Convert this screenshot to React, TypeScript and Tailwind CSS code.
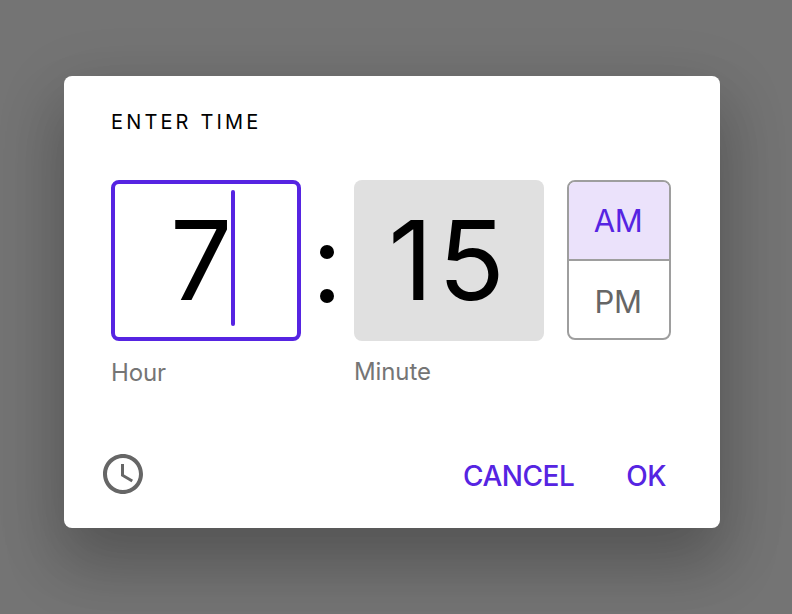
export default function App() {
  return (
    <div className="flex h-[614px] w-[792px] overflow-hidden bg-[#747474] pl-16 pt-[76px] font-['Inter',sans-serif]">
      <main className="flex h-[452px] w-[656px] flex-col rounded-lg bg-white pl-[47px] pr-[49px] pt-8 shadow-[0_36px_60px_3px_rgba(0,0,0,0.18),0_18px_70px_4px_rgba(0,0,0,0.12)]">
        <h1 className="h-[26px] whitespace-nowrap pt-px text-[20px] leading-[26px] tracking-[3.15px] text-black">ENTER TIME</h1>
        <div className="mt-[46px] flex h-[161px] shrink-0">
          <div className="flex h-[161px] w-[190px] shrink-0 rounded-lg border-4 border-[#5624e2] pl-[55px] pt-[6px]">
            <span className="w-[61px] whitespace-nowrap text-[110px] leading-[140px]">7</span>
            <span className="h-[136px] w-1 rounded-full bg-[#5624e2]" />
          </div>
          <div className="flex w-[53px] flex-col items-center gap-[30px] pr-[2px] pt-[65px]">
            <i className="size-[14px] rounded-full bg-black" />
            <i className="size-[14px] rounded-full bg-black" />
          </div>
          <div className="h-[161px] w-[190px] shrink-0 rounded-lg bg-[#e0e0e0] text-center text-[110px] leading-[160px] tracking-[5px]">15</div>
          <div className="ml-[23px] h-[160px] w-[104px] shrink-0 overflow-hidden rounded-lg border-2 border-[#9e9e9e] pr-[2px] text-center text-[31px] tracking-[-0.4px]">
            <div className="-mr-[2px] h-[79px] border-b-2 border-[#9e9e9e] bg-[#ebe2fb] pr-[2px] leading-[78px] text-[#5624e2]">AM</div>
            <div className="h-[77px] leading-[82px] text-[#666]">PM</div>
          </div>
        </div>
        <div className="mt-[17px] flex h-7 text-[24px] leading-7 tracking-[-0.1px] text-[#757575]">
          <span className="w-[243px] pt-px">Hour</span><span>Minute</span>
        </div>
        <footer className="mt-[62px] flex h-[52px] items-center">
          <svg className="-ml-3 size-12 shrink-0" viewBox="0 0 24 24" fill="#666">
            <path d="M11.99 2C6.47 2 2 6.48 2 12s4.47 10 9.99 10C17.52 22 22 17.52 22 12S17.52 2 11.99 2zM12 20c-4.42 0-8-3.58-8-8s3.58-8 8-8 8 3.58 8 8-3.58 8-8 8zM12.5 7H11v6l5.25 3.15.75-1.23-4.5-2.67z" />
          </svg>
          <span className="ml-auto pt-[3px] text-[28px] font-medium tracking-[-0.5px] text-[#5624e2]">CANCEL</span>
          <span className="ml-[52px] mr-[5px] pt-[3px] text-[28px] font-medium tracking-[-0.5px] text-[#5624e2]">OK</span>
        </footer>
      </main>
    </div>
  );
}
